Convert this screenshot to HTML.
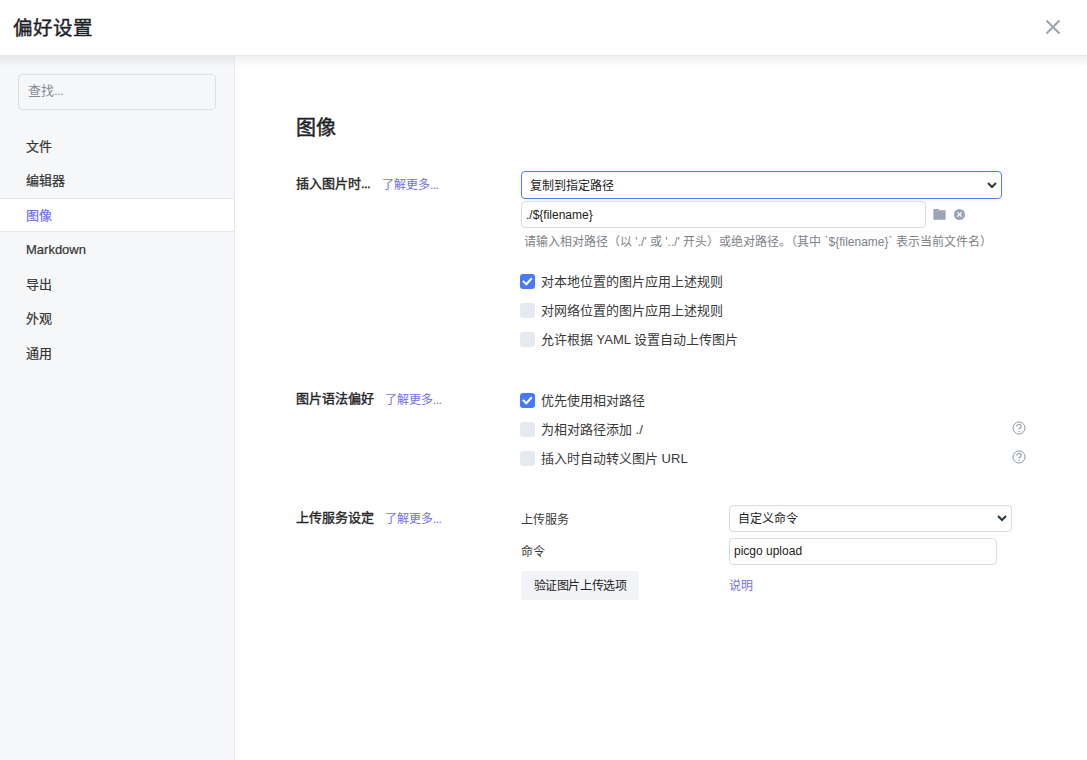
<!DOCTYPE html>
<html lang="zh-CN"><head><meta charset="utf-8">
<style>
*{box-sizing:border-box;margin:0;padding:0}
html,body{width:1087px;height:760px;overflow:hidden;background:#fff;font-family:"Liberation Sans",sans-serif;color:#333}
.abs{position:absolute}
.dots{letter-spacing:-0.6px}
#hdr{left:0;top:0;width:1087px;height:56px;background:#fff;border-bottom:1px solid #e4e9ee;z-index:3}
#hdr .t{left:13px;top:15px;font-size:19.5px;font-weight:400;-webkit-text-stroke:0.45px #1f2328;color:#1f2328;line-height:26px}
#shadow{left:0;top:56px;width:1087px;height:11px;background:linear-gradient(rgba(20,30,40,0.065),rgba(20,30,40,0));z-index:2}
#sbr{left:234px;top:56px;width:1px;height:704px;background:#e3e8ee;z-index:4}
#side{left:0;top:56px;width:234px;height:704px;background:#f5f7f9}
#search{left:18px;top:74px;width:198px;height:36px;border:1px solid #d9e0e8;border-radius:4px;background:#f5f7f9;font-size:13px;color:#878c94;padding-left:9px;line-height:32px}
.nav{left:26px;font-size:13px;color:#333;line-height:20px;-webkit-text-stroke:0.2px currentColor}
#act{left:0;top:198px;width:234px;height:34px;background:#fff;border-top:1px solid #e3e8ee;border-bottom:1px solid #e3e8ee}
.h1{left:296px;top:114px;font-size:20px;font-weight:400;-webkit-text-stroke:0.45px #1f2328;color:#1f2328;line-height:28px}
.lbl{font-size:13px;font-weight:400;-webkit-text-stroke:0.4px #262626;color:#262626;line-height:18px}
.link{font-size:12px;color:#6f6ff0;line-height:18px}
.txt{font-size:13px;color:#393939;line-height:18px}
.sel{border:1px solid #d7dde5;border-radius:4px;background:#fff;font-size:12px;color:#222;padding-left:8px}
.inp{border:1px solid #d7dde5;border-radius:4px;background:#fff;font-size:12px;color:#222;padding-left:4px}
.cb{width:15px;height:15px;border-radius:3px;background:#e5e9f0}
.cb svg{position:absolute;left:0;top:0}
.cb.on{background:#477bf5}
.help{font-size:12px;color:#7d8288;line-height:16px}
</style></head><body>
<div id="hdr" class="abs"><div class="abs t">偏好设置</div>
<svg class="abs" style="left:1045px;top:19px" width="16" height="16" viewBox="0 0 16 16"><path d="M1.5 1.5L14.5 14.5M14.5 1.5L1.5 14.5" stroke="#9aa6b3" stroke-width="2"/></svg>
</div>
<div id="shadow" class="abs"></div>
<div id="side" class="abs"></div>
<div id="sbr" class="abs"></div>
<div id="search" class="abs">查找<span class="dots">...</span></div>
<div id="act" class="abs"></div>
<div class="abs nav" style="top:137px">文件</div>
<div class="abs nav" style="top:171px">编辑器</div>
<div class="abs nav" style="top:206px;color:#6f6ff0">图像</div>
<div class="abs nav" style="top:240px">Markdown</div>
<div class="abs nav" style="top:275px">导出</div>
<div class="abs nav" style="top:309px">外观</div>
<div class="abs nav" style="top:344px">通用</div>

<div class="abs h1">图像</div>

<div class="abs lbl" style="left:296px;top:175px">插入图片时<span class="dots">...</span></div>
<div class="abs link" style="left:382px;top:176px">了解更多<span class="dots">...</span></div>
<div class="abs sel" style="left:521px;top:171px;width:481px;height:28px;border-color:#4a80f5;box-shadow:0 0 6px rgba(0,0,0,0.06);line-height:28px">复制到指定路径</div>
<div class="abs inp" style="left:521px;top:201px;width:405px;height:27px;line-height:26px;padding-left:4px">./${filename}</div>
<svg class="abs" style="left:985px;top:180px" width="14" height="10" viewBox="0 0 14 10"><path d="M3 3L7 7L11 3" fill="none" stroke="#2f3a45" stroke-width="2.1"/></svg>
<svg class="abs" style="left:933px;top:208px" width="14" height="13" viewBox="0 0 14 13"><path d="M0.4 1.6Q0.4 1 1 1h4.4l1.3 1.3h5.9v9.5H0.4z" fill="#9aa5b3"/><path d="M0.4 2.9h12.2" stroke="#adb6c1" stroke-width="0.7"/></svg>
<svg class="abs" style="left:953px;top:208px" width="13" height="13" viewBox="0 0 13 13"><circle cx="6.5" cy="6.5" r="5.6" fill="#9aa5b3"/><path d="M4.4 4.4L8.6 8.6M8.6 4.4L4.4 8.6" stroke="#fff" stroke-width="1.3"/></svg>
<div class="abs help" style="left:524px;top:234px">请输入相对路径（以 './' 或 '../' 开头）或绝对路径。（其中 `${filename}` 表示当前文件名）</div>
<div class="abs cb on" style="left:520px;top:274px"><svg width="15" height="15" viewBox="0 0 15 15"><path d="M2.9 6.9L6.3 10.2L11.8 4.2" fill="none" stroke="#fff" stroke-width="2"/></svg></div>
<div class="abs txt" style="left:541px;top:273px">对本地位置的图片应用上述规则</div>
<div class="abs cb" style="left:520px;top:303px"></div>
<div class="abs txt" style="left:541px;top:302px">对网络位置的图片应用上述规则</div>
<div class="abs cb" style="left:520px;top:332px"></div>
<div class="abs txt" style="left:541px;top:331px">允许根据 YAML 设置自动上传图片</div>

<div class="abs lbl" style="left:296px;top:390px">图片语法偏好</div>
<div class="abs link" style="left:385px;top:391px">了解更多<span class="dots">...</span></div>
<div class="abs cb on" style="left:520px;top:393px"><svg width="15" height="15" viewBox="0 0 15 15"><path d="M2.9 6.9L6.3 10.2L11.8 4.2" fill="none" stroke="#fff" stroke-width="2"/></svg></div>
<div class="abs txt" style="left:541px;top:392px">优先使用相对路径</div>
<div class="abs cb" style="left:520px;top:422px"></div>
<div class="abs txt" style="left:541px;top:421px">为相对路径添加 ./</div>
<div class="abs cb" style="left:520px;top:451px"></div>
<div class="abs txt" style="left:541px;top:450px">插入时自动转义图片 URL</div>

<svg class="abs" style="left:1012px;top:421px" width="14" height="14" viewBox="0 0 14 14"><circle cx="7" cy="7" r="6" fill="none" stroke="#8c99a8" stroke-width="1"/><path d="M4.7 5.5C4.7 4.3 5.7 3.5 7 3.5C8.3 3.5 9.2 4.3 9.2 5.3C9.2 6.7 7.1 6.9 7.1 8.6" fill="none" stroke="#8c99a8" stroke-width="1.1"/><circle cx="7.1" cy="10.4" r="0.7" fill="#8c99a8"/></svg>
<svg class="abs" style="left:1012px;top:450px" width="14" height="14" viewBox="0 0 14 14"><circle cx="7" cy="7" r="6" fill="none" stroke="#8c99a8" stroke-width="1"/><path d="M4.7 5.5C4.7 4.3 5.7 3.5 7 3.5C8.3 3.5 9.2 4.3 9.2 5.3C9.2 6.7 7.1 6.9 7.1 8.6" fill="none" stroke="#8c99a8" stroke-width="1.1"/><circle cx="7.1" cy="10.4" r="0.7" fill="#8c99a8"/></svg>
<div class="abs lbl" style="left:296px;top:509px">上传服务设定</div>
<div class="abs link" style="left:385px;top:510px">了解更多<span class="dots">...</span></div>
<div class="abs txt" style="left:521px;top:511px;font-size:12px">上传服务</div>
<div class="abs sel" style="left:729px;top:505px;width:283px;height:27px;line-height:27px">自定义命令</div>
<svg class="abs" style="left:995px;top:513px" width="14" height="10" viewBox="0 0 14 10"><path d="M3 3L7 7L11 3" fill="none" stroke="#2f3a45" stroke-width="2.1"/></svg>
<div class="abs txt" style="left:521px;top:543px;font-size:12px">命令</div>
<div class="abs inp" style="left:729px;top:538px;width:268px;height:27px;line-height:25px">picgo upload</div>
<div class="abs" style="left:521px;top:571px;width:118px;height:29px;background:#f3f4f7;border-radius:3px;font-size:12px;letter-spacing:-0.45px;color:#222;line-height:31px;text-align:center">验证图片上传选项</div>
<div class="abs link" style="left:729px;top:577px">说明</div>
</body></html>
